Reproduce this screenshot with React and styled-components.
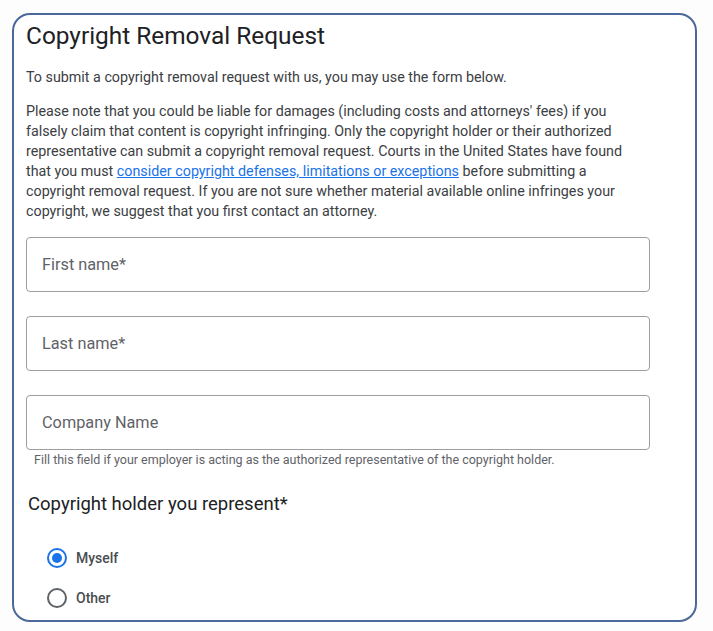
import styled, { createGlobalStyle } from "styled-components";

const GlobalStyle = createGlobalStyle`
    body {
        margin: 0;
        background: #fdfdfd;
        font-family: Roboto, "Liberation Sans", Arial, sans-serif;
    }
    * { box-sizing: border-box; }
`;

export default function App() {
    return (
        <>
            <GlobalStyle />
            <Page>
                <Frame>
                    <Title>Copyright Removal Request</Title>
                    <Intro>To submit a copyright removal request with us, you may use the form below.</Intro>
                    <Notice>
                        Please note that you could be liable for damages (including costs and attorneys' fees) if you<br />
                        falsely claim that content is copyright infringing. Only the copyright holder or their authorized<br />
                        representative can submit a copyright removal request. Courts in the United States have found<br />
                        that you must <a href="#defenses">consider copyright defenses, limitations or exceptions</a> before submitting a<br />
                        copyright removal request. If you are not sure whether material available online infringes your<br />
                        copyright, we suggest that you first contact an attorney.
                    </Notice>
                    <Fields>
                        <TextField placeholder="First name*" />
                        <TextField placeholder="Last name*" />
                        <div>
                            <TextField placeholder="Company Name" />
                            <Hint>Fill this field if your employer is acting as the authorized representative of the copyright holder.</Hint>
                        </div>
                    </Fields>
                    <SectionTitle>Copyright holder you represent*</SectionTitle>
                    <RadioGroup>
                        <RadioRow>
                            <Radio $checked />
                            <RadioLabel>Myself</RadioLabel>
                        </RadioRow>
                        <RadioRow>
                            <Radio />
                            <RadioLabel>Other</RadioLabel>
                        </RadioRow>
                    </RadioGroup>
                </Frame>
            </Page>
        </>
    );
}

const Page = styled.div`
    padding: 13px 16px 10px 12px;
`;
const Frame = styled.div`
    width: 685px;
    height: 609px;
    border: 2px solid #4b689a;
    border-radius: 18px;
    background: #fff;
    overflow: hidden;
    padding: 7px 12px 0 12px;
`;
const Title = styled.h1`
    margin: 0;
    font-size: 24.4px;
    line-height: 28px;
    font-weight: 400;
    color: #202124;
`;
const Intro = styled.p`
    margin: 17px 0 0;
    font-size: 14.3px;
    line-height: 20px;
    color: #3c4043;
`;
const Notice = styled.p`
    margin: 14px 0 0;
    width: 650px;
    font-size: 14.3px;
    line-height: 20px;
    color: #3c4043;
    a {
        color: #1a73e8;
        text-decoration: underline;
    }
`;
const Fields = styled.div`
    margin-top: 16px;
    width: 624px;
    display: flex;
    flex-direction: column;
    gap: 24px;
`;
const TextField = styled.input`
    display: block;
    width: 100%;
    height: 55px;
    border: 1px solid #9e9e9e;
    border-radius: 4px;
    padding: 0 15px;
    font-family: Roboto, "Liberation Sans", Arial, sans-serif;
    font-size: 16.3px;
    color: #202124;
    background: #fff;
    outline: none;
    &::placeholder {
        color: #5f6368;
    }
`;
const Hint = styled.div`
    margin-top: 2px;
    padding-left: 8px;
    font-size: 12.5px;
    line-height: 15px;
    color: #5f6368;
`;
const SectionTitle = styled.h2`
    margin: 25px 0 0 2px;
    font-size: 18.5px;
    line-height: 24px;
    font-weight: 400;
    color: #202124;
`;
const RadioGroup = styled.div`
    margin-top: 22px;
    display: flex;
    flex-direction: column;
`;
const RadioRow = styled.label`
    height: 40px;
    display: flex;
    align-items: center;
    gap: 9px;
    padding-left: 21px;
`;
const Radio = styled.span`
    width: 20px;
    height: 20px;
    border-radius: 50%;
    border: 2px solid ${(p) => (p.$checked ? "#1a73e8" : "#5f6368")};
    display: flex;
    align-items: center;
    justify-content: center;
    &::after {
        content: "";
        width: 10px;
        height: 10px;
        border-radius: 50%;
        background: #1a73e8;
        display: ${(p) => (p.$checked ? "block" : "none")};
    }
`;
const RadioLabel = styled.span`
    font-size: 14px;
    font-weight: 500;
    color: #4a4d51;
`;
